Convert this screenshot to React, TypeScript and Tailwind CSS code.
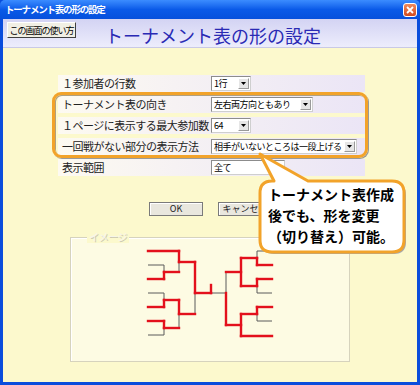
import type { ReactNode } from 'react'

const RED = '#e3101c'
const GRAY = '#5a5a5a'

// [x1, y1, x2, y2, red?] in page coordinates
const lines: [number, number, number, number, boolean][] = [
    // left half
    [148, 252, 179, 252, true],
    [179, 252, 179, 263, true],
    [179, 263, 179, 273, false],
    [179, 263, 195, 263, true],
    [148, 266, 164, 266, false],
    [164, 266, 164, 273, false],
    [164, 273, 164, 280, true],
    [148, 280, 164, 280, true],
    [164, 273, 179, 273, true],
    [148, 294, 164, 294, false],
    [164, 294, 164, 301, false],
    [164, 301, 164, 308, true],
    [148, 308, 164, 308, true],
    [164, 301, 179, 301, true],
    [148, 322, 164, 322, true],
    [164, 322, 164, 329, true],
    [164, 329, 164, 336, false],
    [148, 336, 164, 336, false],
    [164, 329, 179, 329, true],
    [179, 301, 179, 315, true],
    [179, 315, 179, 329, false],
    [179, 315, 195, 315, true],
    [195, 263, 195, 294, true],
    [195, 294, 195, 315, false],
    [195, 294, 211, 294, true],
    [211, 286, 211, 294, true],
    [211, 294, 226, 294, false],
    // right half
    [226, 273, 226, 294, false],
    [226, 294, 226, 326, true],
    [226, 273, 241, 273, true],
    [226, 326, 241, 326, true],
    [241, 259, 241, 287, true],
    [241, 259, 257, 259, true],
    [241, 287, 257, 287, true],
    [257, 252, 257, 259, false],
    [257, 259, 257, 266, true],
    [257, 252, 272, 252, false],
    [257, 266, 272, 266, true],
    [257, 280, 257, 287, true],
    [257, 287, 257, 294, false],
    [257, 280, 272, 280, true],
    [257, 294, 272, 294, false],
    [241, 315, 241, 337, true],
    [241, 315, 257, 315, true],
    [241, 337, 272, 337, true],
    [257, 308, 257, 315, true],
    [257, 315, 257, 322, false],
    [257, 308, 272, 308, true],
    [257, 322, 272, 322, false],
]

function Bracket() {
    const gray = lines.filter(l => !l[4])
    const red = lines.filter(l => l[4])
    return (
        <svg width="278" height="123" viewBox="71 239 278 123" className="block">
            {gray.map(([x1, y1, x2, y2], i) => (
                <line key={'g' + i} x1={x1} y1={y1} x2={x2} y2={y2} stroke={GRAY} strokeWidth={1} />
            ))}
            {red.map(([x1, y1, x2, y2], i) => (
                <line key={'r' + i} x1={x1} y1={y1} x2={x2} y2={y2} stroke={RED} strokeWidth={2.4} strokeLinecap="square" />
            ))}
        </svg>
    )
}

function Select({ w, text, arrow = true }: { w: string; text: string; arrow?: boolean }) {
    return (
        <div className={`h-[15px] ${w} flex items-center bg-white border border-[#8c8c8c] border-r-[#cfcfcf] border-b-[#cfcfcf]`}>
            <span className="flex-1 pl-[2px] text-[9px] leading-[13px] text-black tracking-[-0.5px] whitespace-nowrap">
                {text}
            </span>
            {arrow && (
                <div className="w-[11px] h-[11px] mr-[1px] shrink-0 flex items-center justify-center bg-[#e6e6e6] border border-t-white border-l-white border-b-[#9a9a9a] border-r-[#9a9a9a]">
                    <svg width="5" height="3" viewBox="0 0 5 3">
                        <path d="M0 0h5L2.5 3z" fill="#000" />
                    </svg>
                </div>
            )}
        </div>
    )
}

function Row({ label, children }: { label: string; children: ReactNode }) {
    return (
        <div className="h-[17px] flex items-center pl-[4px] bg-gradient-to-r from-[#fdfaf1] to-[#ebe5f6]">
            <span className="w-[149px] text-[11px] leading-[15px] text-[#222] tracking-[-0.5px] whitespace-nowrap">{label}</span>
            {children}
        </div>
    )
}

function Btn({ children }: { children: ReactNode }) {
    return (
        <div className="w-[54px] h-[14px] flex items-center justify-center bg-[#e9e7de] border border-[#7a7a7a] shadow-[inset_1px_1px_0_#fff] text-[9px] leading-[12px] text-[#222] whitespace-nowrap">
            {children}
        </div>
    )
}

export default function App() {
    return (
        <div className="relative w-[420px] h-[385px] overflow-hidden flex flex-col bg-[#0a4ddc] font-['Noto_Sans_CJK_JP','Liberation_Sans',sans-serif]">
            {/* title bar */}
            <div className="h-[19px] shrink-0 flex items-center justify-between pl-[5px] pr-[3px] rounded-t-[5px] bg-gradient-to-b from-[#3b8cff] via-[#0a5ae8] to-[#0650dc]">
                <span className="text-white text-[9.5px] font-bold tracking-[-1.2px] leading-[13px] whitespace-nowrap">トーナメント表の形の設定</span>
                <div className="w-[14px] h-[14px] rounded-[3px] border border-white bg-gradient-to-b from-[#f08a5c] to-[#d24a1c] flex items-center justify-center">
                    <svg width="8" height="8" viewBox="0 0 8 8">
                        <path d="M1 1l6 6M7 1l-6 6" stroke="#fff" strokeWidth="1.8" />
                    </svg>
                </div>
            </div>

            <div className="flex-1 mx-[3px] mb-[3px] flex flex-col bg-[#fcf9cd]">
                {/* header band */}
                <div className="h-[29px] shrink-0 flex bg-gradient-to-b from-[#d3d3f3] to-[#ededfc] border-b border-[#c9c9e6]">
                    <div className="ml-[4px] mt-[3px] w-[69px] h-[16px] flex items-center justify-center bg-[#f1efe4] border border-t-white border-l-white border-b-[#404040] border-r-[#404040] text-[9px] leading-[13px] tracking-[-1px] text-black whitespace-nowrap">
                        この画面の使い方
                    </div>
                    <div className="ml-[29px] self-center mt-[3px] text-[18px] leading-[22px] text-[#2a2ab4] whitespace-nowrap">
                        トーナメント表の形の設定
                    </div>
                </div>

                {/* settings rows */}
                <div className="mt-[27px] ml-[55px] w-[307px] flex flex-col gap-[4px]">
                    <Row label="１参加者の行数">
                        <Select w="w-[40px]" text="1行" />
                    </Row>
                    <Row label="トーナメント表の向き">
                        <Select w="w-[102px]" text="左右両方向ともあり" />
                    </Row>
                    <Row label="１ページに表示する最大参加数">
                        <Select w="w-[40px]" text="64" />
                    </Row>
                    <Row label="一回戦がない部分の表示方法">
                        <Select w="w-[146px]" text="相手がいないところは一段上げる" />
                    </Row>
                    <Row label="表示範囲">
                        <Select w="w-[74px]" text="全て" arrow={false} />
                    </Row>
                </div>

                {/* buttons */}
                <div className="mt-[26px] ml-[146px] flex gap-[15px]">
                    <Btn>OK</Btn>
                    <Btn>キャンセル</Btn>
                </div>

                {/* image group */}
                <div className="relative mt-[21px] ml-[67px] w-[280px] h-[125px] border border-[#d6d3bd] shadow-[inset_1px_1px_0_#fff] bg-[#fdfbe3]">
                    <span className="absolute left-[16px] top-[-7px] px-[2px] bg-[#fcf9cd] text-[10px] leading-[12px] tracking-[-0.5px] text-[#f6f5ee] [text-shadow:1px_1px_0_#c9c6b0]">
                        イメージ
                    </span>
                    <Bracket />
                </div>
            </div>

            {/* orange highlight */}
            <div className="absolute left-[52px] top-[92px] w-[316px] h-[66px] rounded-[9px] border-[3px] border-[#f2a32a] shadow-[1px_1px_0_#9a9a9a,inset_1px_1px_0_#b0a080]" />

            {/* callout */}
            <svg className="absolute left-[255px] top-[150px]" width="158" height="110" viewBox="0 0 158 110">
                <path
                    d="M19 33 L21 33 L7 6 L55 33 L139 33 Q151 33 151 45 L151 92 Q151 104 139 104 L19 104 Q7 104 7 92 L7 45 Q7 33 19 33 Z"
                    fill="#a8a8a8"
                />
                <path
                    d="M17 31 L19 31 L5 4 L53 31 L137 31 Q149 31 149 43 L149 90 Q149 102 137 102 L17 102 Q5 102 5 90 L5 43 Q5 31 17 31 Z"
                    fill="#fff"
                    stroke="#f2a32a"
                    strokeWidth="3"
                    strokeLinejoin="round"
                />
            </svg>
            <div className="absolute left-[268px] top-[184px] text-[14px] leading-[21px] font-bold text-black whitespace-nowrap">
                <div>トーナメント表作成</div>
                <div>後でも、形を変更</div>
                <div>（切り替え）可能。</div>
            </div>
        </div>
    )
}
